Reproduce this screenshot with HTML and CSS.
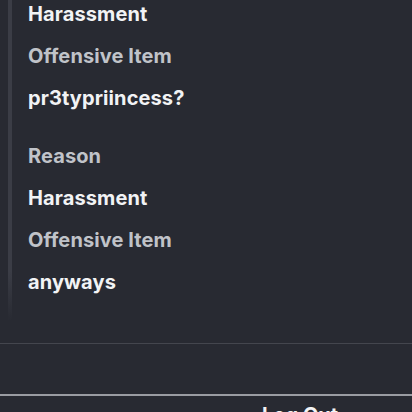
FILE: index.html
```html
<!DOCTYPE html>
<html>
<head>
<meta charset="utf-8">
<link rel="stylesheet" href="styles.css">
</head>
<body>
<div class="page">
  <div class="list">
    <div class="group">
      <div class="value">Harassment</div>
      <div class="label">Offensive Item</div>
      <div class="value">pr3typriincess?</div>
    </div>
    <div class="group">
      <div class="label">Reason</div>
      <div class="value">Harassment</div>
      <div class="label">Offensive Item</div>
      <div class="value">anyways</div>
    </div>
  </div>
  <div class="divider"></div>
  <div class="divider-strong"></div>
  <div class="footer"><span class="logout">Log Out</span></div>
</div>
</body>
</html>
```
FILE: styles.css
```css
html, body {
  margin: 0;
  padding: 0;
  background: #282a32;
  overflow: hidden;
}
.page {
  width: 412px;
  height: 412px;
  overflow: hidden;
  font-family: Inter, "Noto Sans", sans-serif;
  font-size: 20px;
}
.list {
  margin: -7px 0 0 8px;
  padding: 0 0 17px 16px;
  border-left: 4px solid #3b3d46;
  border-image: linear-gradient(to bottom, #3b3d46 0%, #3b3d46 85%, rgba(59,61,70,0) 100%) 1;
  display: flex;
  flex-direction: column;
  gap: 16px;
}
.group {
  display: flex;
  flex-direction: column;
}
.value, .label {
  line-height: 42px;
  font-weight: 700;
  white-space: nowrap;
  letter-spacing: 0.1px;
}
.value {
  color: #f2f3f5;
}
.label {
  color: #c0c3c9;
}
.divider {
  margin-top: 23px;
  height: 1px;
  background: #44464e;
}
.divider-strong {
  margin-top: 50px;
  height: 2px;
  background: #9a9ca2;
}
.footer {
  padding: 7px 0 0 262px;
  line-height: 24px;
  color: #f2f3f5;
  font-weight: 700;
}
```
